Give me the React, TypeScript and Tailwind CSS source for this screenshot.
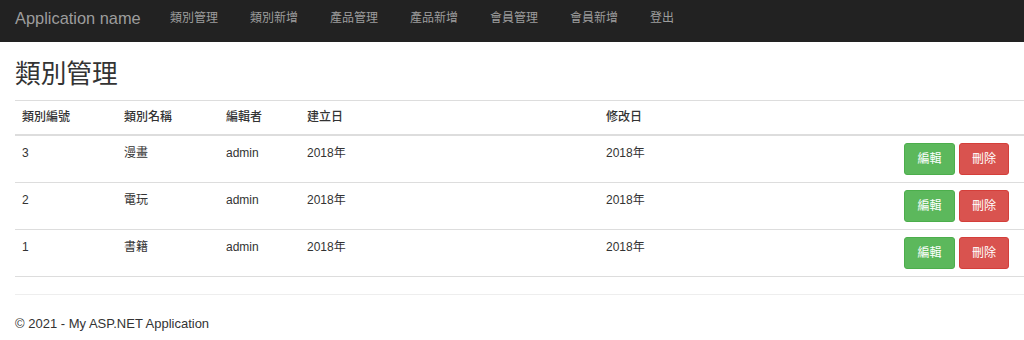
import React from 'react';

const navItems = ['類別管理', '類別新增', '產品管理', '產品新增', '會員管理', '會員新增', '登出'];

const rows = [
  { id: 3, name: '漫畫', editor: 'admin', created: '2018年', modified: '2018年' },
  { id: 2, name: '電玩', editor: 'admin', created: '2018年', modified: '2018年' },
  { id: 1, name: '書籍', editor: 'admin', created: '2018年', modified: '2018年' },
];

const font = { fontFamily: '"Liberation Sans", "Noto Sans CJK TC", Arial, sans-serif' };

export default function App() {
  return (
    <div className="min-h-[340px] bg-white text-[12px] leading-[17px] text-[#333]" style={font}>
      {/* Navbar */}
      <nav className="flex h-[42px] items-center bg-[#222] pb-[5px] pl-[15px]">
        <span className="w-[155px] text-[16.4px] text-[#9d9d9d]">Application name</span>
        <ul className="flex">
          {navItems.map((item) => (
            <li key={item} className="w-[80px] text-[12px] text-[#9d9d9d]">
              {item}
            </li>
          ))}
        </ul>
      </nav>

      <div className="pl-[15px]">
        <h2 className="mt-[18px] mb-[12px] text-[25.7px] leading-[28px] font-normal text-[#333]">類別管理</h2>

        <table className="w-full border-collapse border-t border-[#ddd] text-left">
          <thead>
            <tr className="border-b-2 border-[#ddd]">
              <th className="w-[102px] px-[7px] pt-[8px] pb-[8px] font-medium">類別編號</th>
              <th className="w-[102px] px-[7px] pt-[8px] pb-[8px] font-medium">類別名稱</th>
              <th className="w-[81px] px-[7px] pt-[8px] pb-[8px] font-medium">編輯者</th>
              <th className="w-[299px] px-[7px] pt-[8px] pb-[8px] font-medium">建立日</th>
              <th className="px-[7px] pt-[8px] pb-[8px] font-medium">修改日</th>
              <th className="px-[7px]"></th>
            </tr>
          </thead>
          <tbody>
            {rows.map((row) => (
              <tr key={row.id} className="border-b border-[#ddd] align-top">
                <td className="px-[7px] pt-[9px]">{row.id}</td>
                <td className="px-[7px] pt-[9px]">{row.name}</td>
                <td className="px-[7px] pt-[9px]">{row.editor}</td>
                <td className="px-[7px] pt-[9px]">{row.created}</td>
                <td className="px-[7px] pt-[9px]">{row.modified}</td>
                <td className="pt-[7px] pb-[7px] pr-[15px]">
                  <div className="flex justify-end gap-[4px]">
                    <button className="h-[32px] w-[51px] rounded-[3px] border border-[#4cae4c] bg-[#5cb85c] text-[12px] text-white">
                      編輯
                    </button>
                    <button className="h-[32px] w-[50px] rounded-[3px] border border-[#d43f3a] bg-[#d9534f] text-[12px] text-white">
                      刪除
                    </button>
                  </div>
                </td>
              </tr>
            ))}
          </tbody>
        </table>

        <hr className="mt-[17px] border-t border-[#eee]" />
        <footer className="pt-[20px]">
          <p className="text-[13px]">© 2021 - My ASP.NET Application</p>
        </footer>
      </div>
    </div>
  );
}
